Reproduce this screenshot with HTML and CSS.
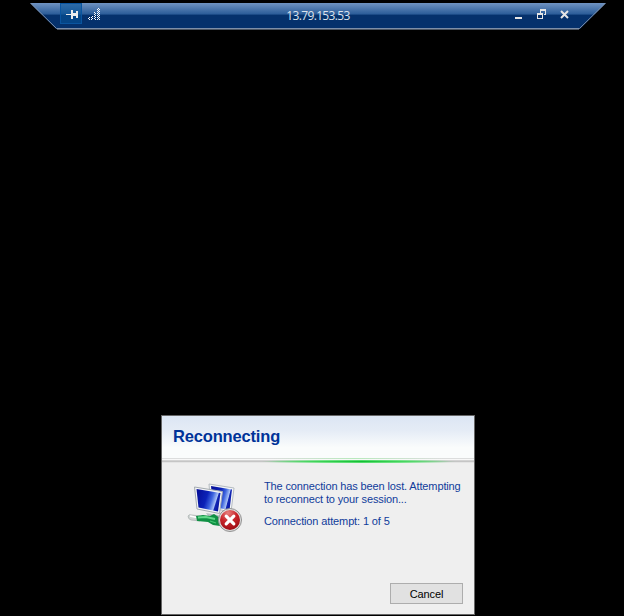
FILE: index.html
```html
<!DOCTYPE html>
<html lang="en">
<head>
<meta charset="utf-8">
<title>Remote session</title>
<link rel="stylesheet" href="styles.css">
</head>
<body>
<header class="bar">
  <svg class="bar-shape" width="576" height="27" viewBox="0 0 576 27" aria-hidden="true">
    <defs>
      <linearGradient id="barFill" x1="0" y1="0" x2="0" y2="1">
        <stop offset="0" stop-color="#6f93c2"/>
        <stop offset=".43" stop-color="#2b5c98"/>
        <stop offset=".46" stop-color="#05316c"/>
        <stop offset="1" stop-color="#05316c"/>
      </linearGradient>
    </defs>
    <path d="M0 0H576L550 26H26Z" fill="url(#barFill)"/>
    <path d="M.5 0L26.5 25.5H549.5L575.5 0" fill="none" stroke="#7d8fa9"/>
    <path d="M27 26.5H549" stroke="#4b5563"/>
  </svg>
  <div class="tools">
    <span class="pin">
      <svg width="22" height="20" viewBox="0 0 22 20" shape-rendering="crispEdges" fill="#ececec" aria-hidden="true">
        <path d="M6 10H11V11H6ZM11 6H13V9H16V7H18V14H16V12H13V15H11Z"/>
      </svg>
    </span>
    <svg class="signal" width="12" height="13" viewBox="0 0 12 13" aria-hidden="true">
      <defs>
        <pattern id="dots" width="2" height="2" patternUnits="userSpaceOnUse">
          <path d="M0 0H1V1H0ZM1 1H2V2H1Z" fill="#fff" shape-rendering="crispEdges"/>
        </pattern>
      </defs>
      <path d="M0 9H2V12H0ZM3 8H5V12H3ZM6 4H8V12H6ZM9 0H12V12H9Z" fill="url(#dots)" shape-rendering="crispEdges"/>
    </svg>
  </div>
  <span class="address">13.79.153.53</span>
  <div class="controls">
    <svg width="60" height="14" viewBox="0 0 60 14" fill="#e6e6e6" aria-hidden="true">
      <path d="M0 9H7V11H0Z"/>
      <path d="M25 1H31V7H29V6H30V3H26V5H25ZM22 5H28V11H22ZM23 7V10H27V7Z" fill-rule="evenodd" shape-rendering="crispEdges"/>
      <path d="M46 3L53 10M53 3L46 10" stroke="#e6e6e6" stroke-width="2"/>
    </svg>
  </div>
</header>

<main class="dialog">
  <h1 class="heading">Reconnecting</h1>
  <div class="progress"></div>
  <section class="content">
    <svg class="icon" width="58" height="54" viewBox="0 0 58 54" aria-hidden="true">
      <defs>
        <linearGradient id="screen" x1="0" y1=".3" x2="1" y2=".6">
          <stop offset="0" stop-color="#06109a"/>
          <stop offset=".4" stop-color="#0c22b8"/>
          <stop offset=".62" stop-color="#3f66df"/>
          <stop offset=".8" stop-color="#a9c2f6"/>
          <stop offset=".84" stop-color="#1226b4"/>
          <stop offset="1" stop-color="#0714a0"/>
        </linearGradient>
        <radialGradient id="badge" cx=".4" cy=".15" r=".85">
          <stop offset="0" stop-color="#e8807d"/>
          <stop offset=".5" stop-color="#c9262b"/>
          <stop offset="1" stop-color="#9e0b12"/>
        </radialGradient>
      </defs>
      <path d="M23 4L48 8L45 32L25 28Z" fill="#f4f5f6" stroke="#b4bbc1"/>
      <path d="M25 6L46 9.500L43.500 30L27 27Z" fill="url(#screen)"/>
      <path d="M20 33L32 35L36 38L24 39Z" fill="#b7bec2"/>
      <path d="M8.500 7L36.500 11.500L33.500 33.500L11 29Z" fill="#f4f5f6" stroke="#a4abb1"/>
      <path d="M10.500 9L34.500 13L32 31.500L12.500 27.500Z" fill="url(#screen)"/>
      <path d="M2 36Q3 34 6 35L14 36V41L5 40Q2 39 2 36Z" fill="#cfd4d3" stroke="#a9b0af" stroke-width=".7"/>
      <path d="M4 36L13 38" stroke="#fff" stroke-width="1.500"/>
      <path d="M10 36L17 35L24 36L28 34L34 38V46L27 45L22 42L11 41Z" fill="#109044"/>
      <path d="M12 37.500L20 37L29 39" fill="none" stroke="#62d98a" stroke-width="1.800"/>
      <path d="M24 41L30 43" stroke="#48c774" stroke-width="1.300"/>
      <circle cx="44" cy="40" r="11.500" fill="#dedede" stroke="#929292"/>
      <circle cx="44" cy="40" r="10" fill="url(#badge)"/>
      <path d="M40.200 36.200L47.800 43.800M47.800 36.200L40.200 43.800" stroke="#fff" stroke-width="3.200" stroke-linecap="round"/>
    </svg>
    <div class="message">
      <p>The connection has been lost. Attempting<br>to reconnect to your session...</p>
      <p>Connection attempt: 1 of 5</p>
    </div>
  </section>
  <footer class="actions"><button class="cancel" type="button">Cancel</button></footer>
</main>
</body>
</html>
```
FILE: styles.css
```css
* { box-sizing: border-box; }

body {
  margin: 0;
  width: 624px;
  height: 616px;
  overflow: hidden;
  background: #000;
  display: flex;
  flex-direction: column;
  font-family: "Liberation Sans", Arial, sans-serif;
}

.bar {
  position: relative;
  width: 576px;
  height: 27px;
  margin: 3px 0 0 30px;
  display: grid;
  grid-template-columns: 1fr auto 1fr;
}

.bar-shape { position: absolute; inset: 0; }
.tools, .address, .controls { position: relative; }
.tools { display: flex; padding-left: 30px; }

.pin {
  width: 22px;
  height: 21px;
  border: 1px solid #0a559f;
  background: rgb(5 83 151 / 60%);
}

.pin svg { display: block; margin: 0 0 0 -1px; }
.signal { margin: 5px 0 0 6px; }

.address {
  color: #dce3ed;
  font: 12px/25px "Open Sans", sans-serif;
  letter-spacing: -.65px;
}

.controls { display: flex; justify-content: flex-end; padding: 5px 31px 0 0; }

.dialog {
  width: 314px;
  height: 200px;
  margin: 385px 0 0 161px;
  border: 1px solid #666;
  background: #efefef;
  display: flex;
  flex-direction: column;
}

.heading {
  height: 42px;
  margin: 0;
  padding: 11px 0 0 11px;
  background: linear-gradient(#dce6f4, #e5ecf6 35%, #fafcfc 75%, #fafcfc);
  color: #003399;
  font-size: 16.5px;
  letter-spacing: -.17px;
  line-height: 19px;
}

.progress {
  height: 5px;
  background:
    linear-gradient(90deg, transparent 32%, #43d45d 48%, #13bd35 64%, #43d45d 76%, transparent 94%) 0 3px / 100% 1px no-repeat,
    linear-gradient(90deg, transparent 34%, #73e486 52%, #4fdb67 64%, #73e486 76%, transparent 92%) 0 2px / 100% 3px no-repeat,
    linear-gradient(90deg, transparent 35%, #b8e9bd 62%, transparent 90%) 0 0 / 100% 1px no-repeat,
    linear-gradient(#dcdddd 0 1px, #f8f8f8 1px 2px, #d3d3d3 2px 3px, #c5c5c5 3px 4px, #e4e4e4 4px);
}

.content { display: flex; flex: 1; padding: 17px 0 0 24px; }
.icon { flex: none; }

.message {
  padding-left: 20px;
  color: #103c9b;
  font-size: 11px;
  letter-spacing: -.13px;
  line-height: 13px;
  white-space: nowrap;
}

.message p { margin: 0 0 9px; }

.actions { display: flex; justify-content: flex-end; padding: 0 11px 10px 0; }

.cancel {
  width: 73px;
  height: 21px;
  padding: 1px 0 0;
  border: 1px solid #adadad;
  background: #e1e1e1;
  color: #000;
  font: 11px/17px "Liberation Sans", Arial, sans-serif;
  letter-spacing: -.15px;
}
```
